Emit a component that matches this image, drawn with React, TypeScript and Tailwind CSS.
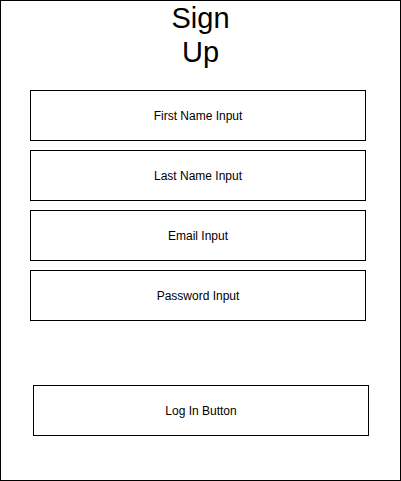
import React from 'react';

const fields = ['First Name Input', 'Last Name Input', 'Email Input', 'Password Input'];

const Box: React.FC<{ label: string; className?: string }> = ({ label, className = '' }) => (
  <div className={`flex h-[51px] w-[336px] items-center justify-center border border-black text-[12px] text-black ${className}`}>
    {label}
  </div>
);

const App: React.FC = () => {
  return (
    <div className="h-[481px] w-[401px] border border-black bg-white font-['Liberation_Sans',Arial,sans-serif]">
      <h1 className="text-center text-[29px] leading-[34px] text-black">
        Sign
        <br />
        Up
      </h1>

      <div className="mt-[21px] ml-[29px] flex flex-col gap-[9px]">
        {fields.map(f => (
          <Box key={f} label={f} />
        ))}
      </div>

      <div className="mt-[64px] ml-[32px]">
        <Box label="Log In Button" />
      </div>
    </div>
  );
};

export default App;
